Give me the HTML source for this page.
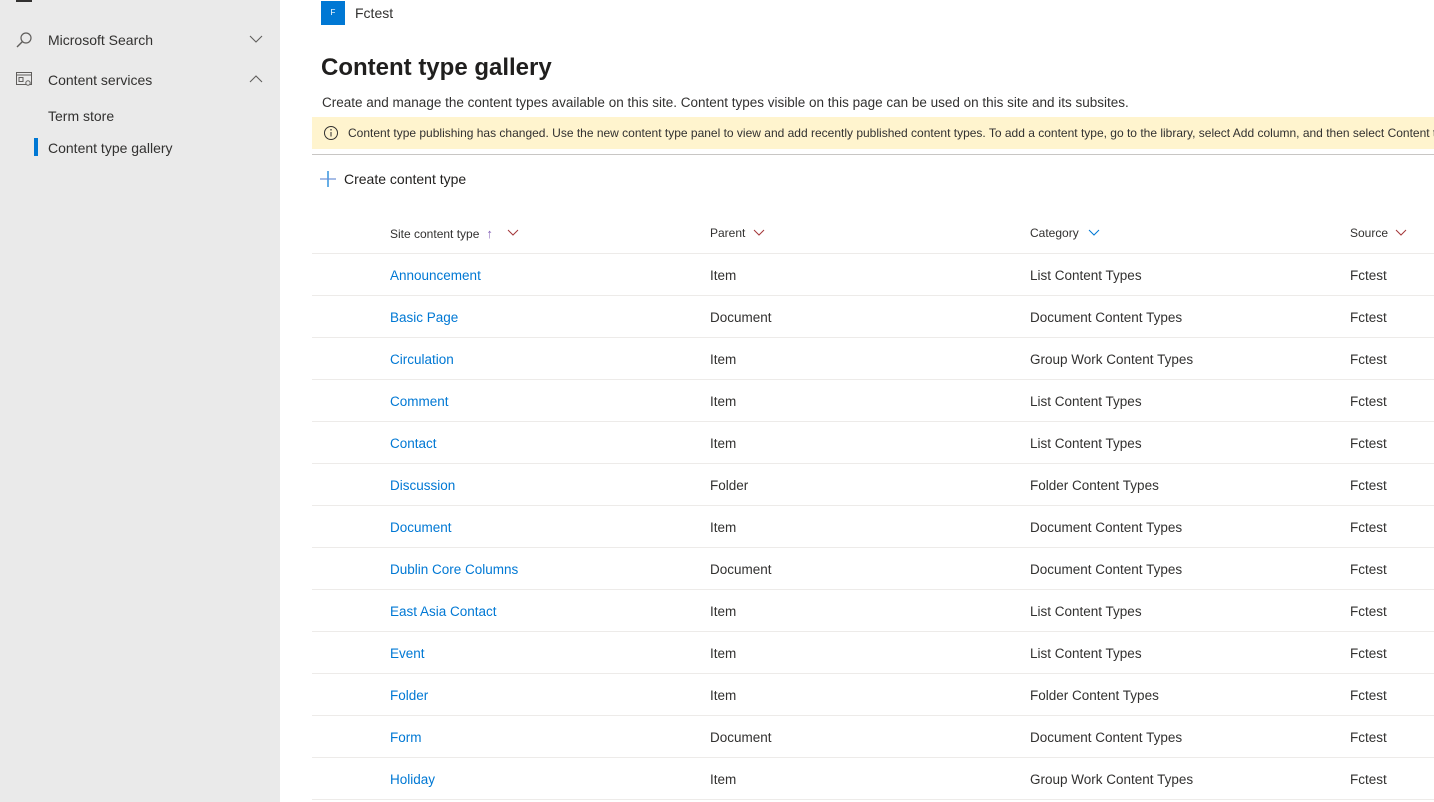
<!DOCTYPE html>
<html><head><meta charset="utf-8"><style>
*{margin:0;padding:0;box-sizing:border-box}
body{width:1434px;height:802px;overflow:hidden;font-family:"Liberation Sans",sans-serif;color:#323130;background:#fff;position:relative}
.side{position:absolute;left:0;top:0;width:280px;height:802px;background:#eaeaea}
.abs{position:absolute;white-space:nowrap}
.nav{font-size:14px;color:#323130}
.row{position:absolute;left:312px;width:1122px;height:42px;border-bottom:1px solid #edebe9;font-size:13.5px}
.row span{position:absolute;top:14px;white-space:nowrap}
.c1{left:78px;color:#0078d4}
.c2{left:398px}.c3{left:718px}.c4{left:1038px}
.h span{font-size:12px;font-weight:normal;color:#323130}
</style></head><body>
<div class="side">
 <div class="abs" style="left:16px;top:0;width:16px;height:2px;background:#323130"></div>
 <svg class="abs" style="left:15px;top:31px" width="18" height="18" viewBox="0 0 18 18"><circle cx="11" cy="7" r="5" fill="none" stroke="#605e5c" stroke-width="1.2"/><line x1="7.5" y1="10.5" x2="2" y2="16" stroke="#605e5c" stroke-width="1.4"/></svg>
 <div class="abs nav" style="left:48px;top:32px">Microsoft Search</div>
 <svg class="abs" style="left:249px;top:35px" width="14" height="9"><polyline points="1,1 7,7 13,1" fill="none" stroke="#605e5c" stroke-width="1.1"/></svg>
 <svg class="abs" style="left:16px;top:72px" width="17" height="16" viewBox="0 0 17 16"><rect x="0.5" y="0.5" width="15" height="12" fill="none" stroke="#605e5c"/><line x1="0.5" y1="3" x2="15.5" y2="3" stroke="#605e5c"/><rect x="3" y="5.5" width="4" height="4" fill="none" stroke="#605e5c"/><circle cx="12" cy="11" r="2.2" fill="#eaeaea" stroke="#605e5c"/></svg>
 <div class="abs nav" style="left:48px;top:72px">Content services</div>
 <svg class="abs" style="left:249px;top:74px" width="14" height="9"><polyline points="1,8 7,2 13,8" fill="none" stroke="#605e5c" stroke-width="1.1"/></svg>
 <div class="abs nav" style="left:48px;top:108px">Term store</div>
 <div class="abs" style="left:34px;top:138px;width:4px;height:18px;background:#0078d4"></div>
 <div class="abs nav" style="left:48px;top:140px">Content type gallery</div>
</div>
<div class="abs" style="left:321px;top:1px;width:24px;height:24px;background:#0078d4;color:#fff;font-size:8px;text-align:center;line-height:24px">F</div>
<div class="abs" style="left:355px;top:5px;font-size:14px">Fctest</div>
<div class="abs" style="left:321px;top:54px;font-size:24px;font-weight:bold;color:#201f1e">Content type gallery</div>
<div class="abs" style="left:322px;top:95px;font-size:13.5px">Create and manage the content types available on this site. Content types visible on this page can be used on this site and its subsites.</div>
<div class="abs" style="left:312px;top:117px;width:1122px;height:32px;background:#fff4ce;overflow:hidden">
 <svg class="abs" style="left:11px;top:8px" width="16" height="16"><circle cx="8" cy="8" r="6.5" fill="none" stroke="#323130"/><line x1="8" y1="7" x2="8" y2="11.5" stroke="#323130"/><circle cx="8" cy="4.8" r="0.8" fill="#323130"/></svg>
 <div class="abs" style="left:36px;top:9px;font-size:12px">Content type publishing has changed. Use the new content type panel to view and add recently published content types. To add a content type, go to the library, select Add column, and then select Content type.</div>
</div>
<div class="abs" style="left:312px;top:154px;width:1122px;height:1px;background:#c8c6c4"></div>
<svg class="abs" style="left:320px;top:171px" width="16" height="16"><line x1="8" y1="0" x2="8" y2="16" stroke="#0078d4" stroke-width="1.2"/><line x1="0" y1="8" x2="16" y2="8" stroke="#6b8ed6" stroke-width="1.2"/></svg>
<div class="abs" style="left:344px;top:171px;font-size:14px;color:#201f1e">Create content type</div>
<div class="row h" style="top:211px;height:43px">
 <span class="c1" style="color:#323130;top:15px">Site content type <span style="position:static;color:#8764b8;font-size:13px">&nbsp;↑</span></span>
 <svg style="position:absolute;left:195px;top:18px" width="12" height="8"><polyline points="1,1 6,6 11,1" fill="none" stroke="#a4373a"/></svg>
 <span class="c2" style="top:15px">Parent</span>
 <svg style="position:absolute;left:441px;top:18px" width="12" height="8"><polyline points="1,1 6,6 11,1" fill="none" stroke="#a4373a"/></svg>
 <span class="c3" style="top:15px">Category</span>
 <svg style="position:absolute;left:776px;top:18px" width="12" height="8"><polyline points="1,1 6,6 11,1" fill="none" stroke="#0078d4"/></svg>
 <span class="c4" style="top:15px">Source</span>
 <svg style="position:absolute;left:1083px;top:18px" width="12" height="8"><polyline points="1,1 6,6 11,1" fill="none" stroke="#a4373a"/></svg>
</div>
<div class="row" style="top:254px"><span class="c1">Announcement</span><span class="c2">Item</span><span class="c3">List Content Types</span><span class="c4">Fctest</span></div>
<div class="row" style="top:296px"><span class="c1">Basic Page</span><span class="c2">Document</span><span class="c3">Document Content Types</span><span class="c4">Fctest</span></div>
<div class="row" style="top:338px"><span class="c1">Circulation</span><span class="c2">Item</span><span class="c3">Group Work Content Types</span><span class="c4">Fctest</span></div>
<div class="row" style="top:380px"><span class="c1">Comment</span><span class="c2">Item</span><span class="c3">List Content Types</span><span class="c4">Fctest</span></div>
<div class="row" style="top:422px"><span class="c1">Contact</span><span class="c2">Item</span><span class="c3">List Content Types</span><span class="c4">Fctest</span></div>
<div class="row" style="top:464px"><span class="c1">Discussion</span><span class="c2">Folder</span><span class="c3">Folder Content Types</span><span class="c4">Fctest</span></div>
<div class="row" style="top:506px"><span class="c1">Document</span><span class="c2">Item</span><span class="c3">Document Content Types</span><span class="c4">Fctest</span></div>
<div class="row" style="top:548px"><span class="c1">Dublin Core Columns</span><span class="c2">Document</span><span class="c3">Document Content Types</span><span class="c4">Fctest</span></div>
<div class="row" style="top:590px"><span class="c1">East Asia Contact</span><span class="c2">Item</span><span class="c3">List Content Types</span><span class="c4">Fctest</span></div>
<div class="row" style="top:632px"><span class="c1">Event</span><span class="c2">Item</span><span class="c3">List Content Types</span><span class="c4">Fctest</span></div>
<div class="row" style="top:674px"><span class="c1">Folder</span><span class="c2">Item</span><span class="c3">Folder Content Types</span><span class="c4">Fctest</span></div>
<div class="row" style="top:716px"><span class="c1">Form</span><span class="c2">Document</span><span class="c3">Document Content Types</span><span class="c4">Fctest</span></div>
<div class="row" style="top:758px"><span class="c1">Holiday</span><span class="c2">Item</span><span class="c3">Group Work Content Types</span><span class="c4">Fctest</span></div>
</body></html>
